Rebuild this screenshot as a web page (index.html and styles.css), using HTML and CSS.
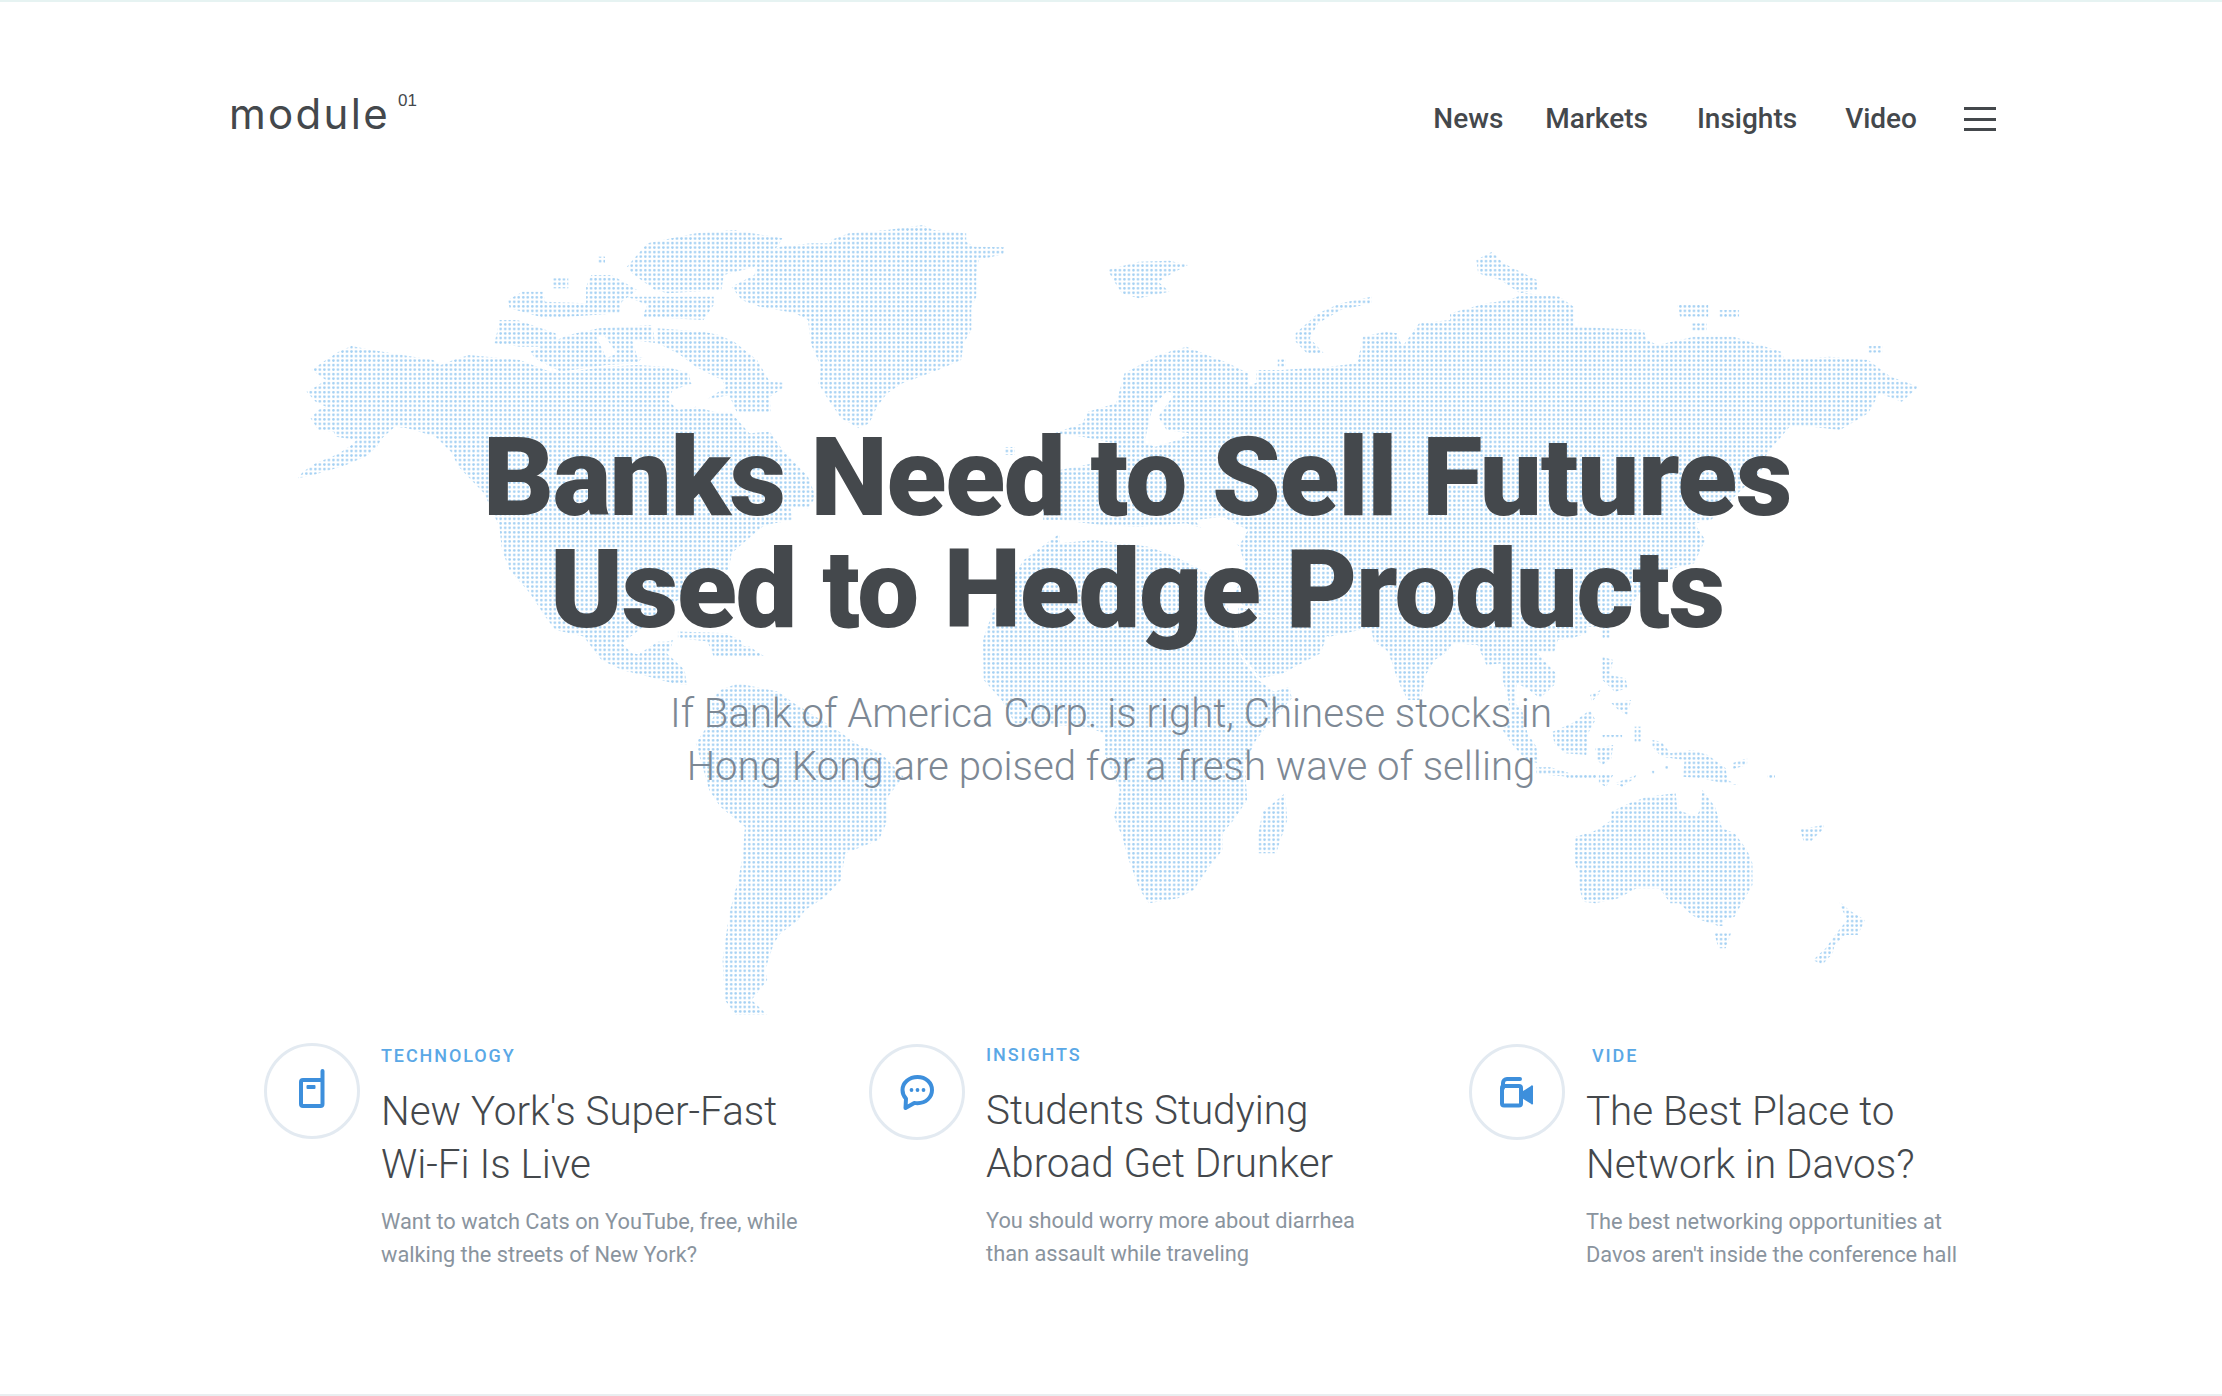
FILE: index.html
```html
<!DOCTYPE html>
<html lang="en">
<head>
<meta charset="utf-8">
<title>module 01</title>
<link rel="stylesheet" href="styles.css">
</head>
<body>
<svg class="world" viewBox="0 0 2222 1396" aria-hidden="true">
  <defs>
    <pattern id="dots" patternUnits="userSpaceOnUse" width="4.52" height="4.52" x="1.2" y="1.3">
      <circle cx="2.26" cy="2.26" r="1.3" fill="#a3d0f3"/>
    </pattern>
    <mask id="land" maskUnits="userSpaceOnUse" x="0" y="0" width="2222" height="1396">
      <g fill="#fff">
        <g transform="translate(280 210) scale(.5102 .3333)">
          <polygon points="35,805 45,785 70,760 114,732 140,705 150,690 110,680 105,665 75,660 60,625 75,600 90,590 70,575 52,545 70,530 90,510 62,480 90,450 115,425 140,408 180,420 240,435 300,450 315,465 340,450 370,435 470,450 520,480 550,490 640,470 700,465 755,470 805,490 810,520 770,540 760,570 780,600 815,590 860,610 885,610 920,670 960,665 985,720 1010,760 1035,800 1050,860 1035,895 1000,890 1005,930 950,945 915,990 885,1030 880,1080 840,1110 770,1180 730,1230 670,1300 690,1330 730,1340 750,1300 770,1290 765,1320 745,1350 715,1365 790,1380 795,1425 770,1420 710,1395 670,1380 630,1350 610,1310 595,1280 540,1260 520,1220 490,1150 450,1080 435,1020 430,950 400,850 350,770 335,725 305,680 250,655 225,650 200,685 190,710 170,738 125,768 65,795"/>
          <polygon points="430,330 465,330 540,370 545,410 470,410 420,400 425,370"/>
          <polygon points="447,270 475,245 515,245 520,275 600,280 600,230 610,195 650,195 700,240 670,275 665,310 520,325 450,295"/>
          <polygon points="535,205 565,205 565,235 535,235"/>
          <polygon points="680,260 850,260 850,285 830,330 710,320 720,285"/>
          <polygon points="680,170 720,100 815,70 890,60 985,85 975,110 930,170 870,195 865,240 760,250 735,240 690,190"/>
          <polygon points="622,140 637,140 637,160 622,160"/>
          <polygon points="740,355 830,365 860,375 890,395 935,450 960,515 988,518 985,535 960,560 962,605 895,605 880,555 835,570 875,530 865,510 815,470 780,430 740,400"/>
          <polygon points="490,425 565,375 625,355 730,345 735,400 700,460 640,465 550,485 500,445"/>
          <polygon points="1080,90 1115,70 1190,60 1260,45 1280,60 1345,70 1345,95 1360,110 1420,112 1418,132 1370,150 1365,190 1365,260 1355,290 1355,360 1340,400 1335,450 1290,480 1220,520 1190,550 1170,590 1155,640 1135,655 1100,625 1075,570 1055,520 1060,470 1040,400 1035,330 1010,310 940,290 905,270 885,230 930,195 935,150 980,110 1040,100 1080,100"/>
          <polygon points="780,1265 880,1270 880,1295 840,1295 780,1285"/>
          <polygon points="840,1300 920,1310 950,1340 850,1340"/>
        </g>
        <g transform="translate(1060 230) scale(.5612 .3333)">
          <polygon points="85,120 140,95 195,92 228,105 200,130 175,155 195,185 140,205 110,190 95,150"/>
          <polygon points="420,310 460,250 500,220 555,200 555,220 500,240 460,280 445,325 470,370 440,370 420,335"/>
          <polygon points="770,65 790,100 850,150 850,180 820,190 785,150 745,130 742,90"/>
          <polygon points="-10,610 40,580 50,545 100,520 115,430 175,375 225,350 300,400 335,430 335,470 360,450 350,420 395,420 480,410 530,400 540,320 580,305 600,310 610,350 640,280 695,270 695,250 760,220 800,210 830,190 890,200 915,230 915,290 1040,300 1045,330 1065,345 1130,320 1200,320 1285,365 1290,385 1340,385 1370,380 1440,390 1480,440 1530,470 1500,515 1460,490 1440,550 1390,600 1340,590 1300,590 1260,670 1250,720 1160,870 1130,880 1150,930 1130,1000 1060,1030 1020,1120 990,1190 560,1190 480,1220 330,1130 310,1100 330,1010 320,950 300,920 225,880 140,890 75,885 0,870 -30,870 -30,800 0,720 60,700 95,640 40,620"/>
          <polygon points="1100,225 1155,225 1155,260 1105,260"/>
          <polygon points="1175,240 1210,240 1210,262 1175,262"/>
          <polygon points="1125,280 1152,280 1152,302 1125,302"/>
          <polygon points="1438,348 1465,348 1465,368 1438,368"/>
          <polygon points="388,388 402,388 402,410 388,410"/>
          <polygon points="350,430 382,430 382,450 350,450"/>
        </g>
        <g transform="translate(640 620) scale(.4464 .3333)">
          <polygon points="768,60 800,-60 860,-180 941,-260 1100,-240 1200,-190 1300,-120 1320,-20 1345,110 1385,180 1420,215 1455,200 1460,235 1410,310 1380,360 1355,430 1360,540 1330,600 1305,640 1305,690 1275,740 1240,810 1205,835 1140,850 1120,810 1095,720 1080,650 1062,590 1075,510 1040,400 1040,340 1000,320 840,310 810,240 770,180"/>
          <polygon points="1340,60 1340,-40 1540,40 1525,100 1440,160 1390,175 1345,100"/>
          <polygon points="180,210 220,190 310,215 345,250 430,320 490,375 540,400 590,470 555,530 555,600 535,660 460,700 450,780 415,830 370,870 355,900 315,940 300,970 280,1050 285,1080 250,1140 285,1185 215,1185 190,1140 185,1020 200,880 220,780 230,710 235,620 180,560 155,510 125,370 165,290 160,240"/>
          <polygon points="0,100 40,65 70,65 60,100 100,150 105,195 75,180 40,175 10,160 0,130"/>
          <polygon points="85,40 130,40 130,55 85,55"/>
          <polygon points="150,65 190,40 225,60 240,100 200,95 160,85"/>
          <polygon points="1445,520 1450,600 1425,700 1385,700 1385,640 1395,575"/>
        </g>
        <g transform="translate(1340 620) scale(.3571 .3333)">
          <polygon points="60,-20 690,-20 690,40 650,55 610,60 600,95 550,95 570,120 605,160 600,195 580,215 560,235 530,210 495,190 490,250 510,270 525,340 550,380 555,430 520,420 480,370 455,330 480,300 470,230 455,180 455,130 410,135 385,75 315,70 300,95 265,120 240,165 225,240 190,240 170,200 155,160 145,125 130,90 95,65 85,20"/>
          <polygon points="735,-20 755,-20 755,55 735,55"/>
          <polygon points="655,725 660,650 720,630 760,600 760,575 810,550 860,530 940,520 945,570 1000,590 1010,560 1015,510 1050,560 1070,625 1105,640 1140,690 1155,730 1155,795 1120,860 1105,890 1075,900 1075,918 1060,918 1010,900 985,885 950,850 925,850 895,805 830,805 780,835 715,850 680,845 670,800 670,760"/>
          <polygon points="1048,940 1095,940 1080,985 1060,985"/>
          <polygon points="1400,845 1425,870 1470,900 1450,945 1415,945 1385,975 1380,1000 1350,1035 1325,1020 1360,985 1390,940 1420,900 1400,855"/>
          <polygon points="875,360 900,365 925,400 985,390 1030,405 1080,445 1085,480 1115,495 1075,490 1010,475 960,470 965,420 900,410 875,380"/>
          <polygon points="595,335 650,310 700,270 715,300 695,340 690,405 630,400 600,370"/>
          <polygon points="715,385 765,375 760,415 735,435 720,420"/>
          <polygon points="550,442 590,442 640,458 640,470 550,462"/>
          <polygon points="635,465 720,465 720,475 635,475"/>
          <polygon points="725,465 765,465 745,500 725,490"/>
          <polygon points="735,110 765,120 755,165 800,175 805,205 770,215 735,180"/>
          <polygon points="760,250 815,240 805,285 780,270"/>
          <polygon points="735,345 790,345 790,355 735,355"/>
          <polygon points="825,320 842,320 842,365 825,365"/>
          <polygon points="770,490 830,465 825,475 790,500"/>
          <polygon points="1098,430 1140,415 1140,435 1098,448"/>
          <polygon points="1198,465 1218,465 1218,475 1198,475"/>
          <polygon points="1288,628 1355,615 1355,625 1320,662 1298,662"/>
          <polygon points="700,225 730,210 725,222 705,245"/>
          <polygon points="870,452 880,452 880,462 870,462"/>
          <polygon points="908,438 918,438 918,448 908,448"/>
        </g>
        <g transform="translate(600 200)">
          <polygon points="405,247 415,247 415,255 405,255"/>
        </g>
      </g>
      <g fill="#000" transform="translate(1060 230) scale(.5612 .3333)">
        <polygon points="150,640 165,530 190,485 205,490 175,560 190,600 230,610 210,630 170,650"/>
        <polygon points="240,870 290,860 335,900 320,945 260,915"/>
        <polygon points="0,890 75,900 140,905 225,890 310,960 300,985 160,950 60,930 0,940"/>
      </g>
      <g fill="#000" transform="translate(280 210) scale(.5102 .3333)">
        <polygon points="620,380 635,375 660,430 640,445"/>
        <polygon points="690,390 740,400 720,445 700,440"/>
        <polygon points="800,475 870,510 845,555 805,520"/>
      </g>
    </mask>
  </defs>
  <rect width="2222" height="1396" fill="url(#dots)" mask="url(#land)"/>
</svg>

<div class="page">
  <header class="topbar">
    <a class="logo" href="#">module<sup class="logo-num">01</sup></a>
    <nav class="nav">
      <a class="nav-link nav-news" href="#">News</a>
      <a class="nav-link nav-markets" href="#">Markets</a>
      <a class="nav-link nav-insights" href="#">Insights</a>
      <a class="nav-link nav-video" href="#">Video</a>
      <button class="burger" type="button" aria-label="Menu"><span></span><span></span><span></span></button>
    </nav>
  </header>

  <section class="hero">
    <h1 class="hero-title">Banks Need to Sell Futures<br>Used to Hedge Products</h1>
    <p class="hero-sub">If Bank of America Corp. is right, Chinese stocks in<br>Hong Kong are poised for a fresh wave of selling</p>
  </section>

  <section class="features">
    <article class="feature feature-one">
      <div class="badge">
        <svg class="badge-icon" viewBox="0 0 30 44" width="30" height="44">
          <path d="M25.5 2V35a2 2 0 0 1-2 2H6a2 2 0 0 1-2-2V13a2 2 0 0 1 2-2h19.5" fill="none" stroke="#3d8fdc" stroke-width="4" stroke-linecap="round" stroke-linejoin="round"/>
          <rect x="9.5" y="16" width="9" height="4" rx="1" fill="#3d8fdc"/>
        </svg>
      </div>
      <div class="feature-body">
        <div class="feature-label">TECHNOLOGY</div>
        <h2 class="feature-title">New York's Super-Fast<br>Wi-Fi Is Live</h2>
        <p class="feature-text">Want to watch Cats on YouTube, free, while<br>walking the streets of New York?</p>
      </div>
    </article>
    <article class="feature feature-two">
      <div class="badge">
        <svg class="badge-icon" viewBox="0 0 36 36" width="36" height="36">
          <path d="M18.500 3C10.200 3 3.500 8.800 3.500 16c0 3.400 1.300 6.400 3.500 8.700L6.500 34l8.800-5.100c1 .2 2.100.3 3.200.3 8.300 0 14.500-5.800 14.500-13.100S26.800 3 18.500 3z" fill="none" stroke="#3d8fdc" stroke-width="4" stroke-linejoin="round"/>
          <circle cx="12.500" cy="16" r="1.900" fill="#3d8fdc"/>
          <circle cx="18.500" cy="16" r="1.900" fill="#3d8fdc"/>
          <circle cx="24.500" cy="16" r="1.900" fill="#3d8fdc"/>
        </svg>
      </div>
      <div class="feature-body">
        <div class="feature-label">INSIGHTS</div>
        <h2 class="feature-title">Students Studying<br>Abroad Get Drunker</h2>
        <p class="feature-text">You should worry more about diarrhea<br>than assault while traveling</p>
      </div>
    </article>
    <article class="feature feature-three">
      <div class="badge">
        <svg class="badge-icon" viewBox="0 0 34 32" width="34" height="32">
          <path d="M3 12V7a4 4 0 0 1 4-4h13" fill="none" stroke="#3d8fdc" stroke-width="4" stroke-linecap="round"/>
          <rect x="2" y="10" width="19" height="19.500" rx="2" fill="none" stroke="#3d8fdc" stroke-width="4"/>
          <path d="M23 15l8-5a1 1 0 0 1 2 .8V27a1 1 0 0 1-2 .8l-8-5z" fill="#3d8fdc"/>
        </svg>
      </div>
      <div class="feature-body">
        <div class="feature-label feature-label-indent">VIDE</div>
        <h2 class="feature-title">The Best Place to<br>Network in Davos?</h2>
        <p class="feature-text">The best networking opportunities at<br>Davos aren't inside the conference hall</p>
      </div>
    </article>
  </section>
</div>
</body>
</html>
```

FILE: styles.css
```css
* { box-sizing: border-box; }

html, body {
  margin: 0;
  height: 100%;
}

body {
  position: relative;
  height: 1396px;
  overflow: hidden;
  background: #fff;
  font-family: Roboto, "Liberation Sans", sans-serif;
  color: #44484c;
}

.world {
  position: absolute;
  top: 0;
  left: 0;
  width: 2222px;
  height: 1396px;
}

.page {
  position: relative;
  height: 1396px;
  border-top: 2px solid #e6f3f2;
  border-bottom: 2px solid #e9eef0;
}

.topbar {
  display: flex;
  justify-content: space-between;
  align-items: flex-start;
  height: 420px;
  padding: 87px 226px 0 229px;
}

.logo {
  display: flex;
  align-items: flex-start;
  font-family: Inter, "Liberation Sans", sans-serif;
  font-weight: 400;
  font-size: 42px;
  line-height: 50px;
  letter-spacing: 2.300px;
  color: #44484c;
  text-decoration: none;
}

.logo-num {
  font-family: "Liberation Sans", sans-serif;
  font-size: 17px;
  line-height: 18px;
  letter-spacing: 0;
  margin: 3px 0 0 8px;
}

.nav {
  display: flex;
  align-items: center;
  padding-top: 11px;
}

.nav-link {
  font-size: 28px;
  line-height: 38px;
  font-weight: 500;
  color: #44484c;
  text-decoration: none;
}

.nav-news { margin-right: 42px; }
.nav-markets { margin-right: 49px; }
.nav-insights { margin-right: 48px; }
.nav-video { margin-right: 47px; }

.burger {
  display: flex;
  flex-direction: column;
  justify-content: space-between;
  width: 32px;
  height: 24px;
  padding: 0;
  border: 0;
  background: none;
}

.burger span {
  display: block;
  height: 3px;
  background: #44484c;
}

.hero {
  display: flex;
  flex-direction: column;
  align-items: center;
}

.hero-title {
  margin: 0 0 0 52px;
  font-size: 110px;
  line-height: 112px;
  font-weight: 900;
  letter-spacing: -1.300px;
  text-align: center;
  color: #44484c;
}

.hero-sub {
  margin: 41px 0 0;
  font-size: 40.200px;
  line-height: 53px;
  font-weight: 300;
  text-align: center;
  color: #7d8894;
}

.features {
  display: flex;
  margin-top: 250px;
  padding-left: 264px;
}

.feature {
  display: flex;
  align-items: flex-start;
  gap: 21px;
}

.feature-one { width: 605px; }
.feature-two { width: 600px; margin-top: 1px; }
.feature-three { margin-top: 1px; }

.feature-one .feature-body { padding-top: 2px; }
.feature-three .feature-body { padding-top: 1px; }

.badge {
  flex: none;
  display: flex;
  align-items: center;
  justify-content: center;
  width: 96px;
  height: 96px;
  border: 3px solid #e3eaf1;
  border-radius: 50%;
}

.feature-label {
  font-size: 18px;
  line-height: 22px;
  font-weight: 500;
  letter-spacing: 1.900px;
  color: #5aa8e6;
}

.feature-label-indent { margin-left: 6px; }

.feature-title {
  margin: 19px 0 0;
  font-size: 40.400px;
  line-height: 52.500px;
  font-weight: 300;
  color: #44484c;
}

.feature-text {
  margin: 15px 0 0;
  font-size: 21.800px;
  line-height: 32.500px;
  font-weight: 400;
  color: #8a949e;
}
```
